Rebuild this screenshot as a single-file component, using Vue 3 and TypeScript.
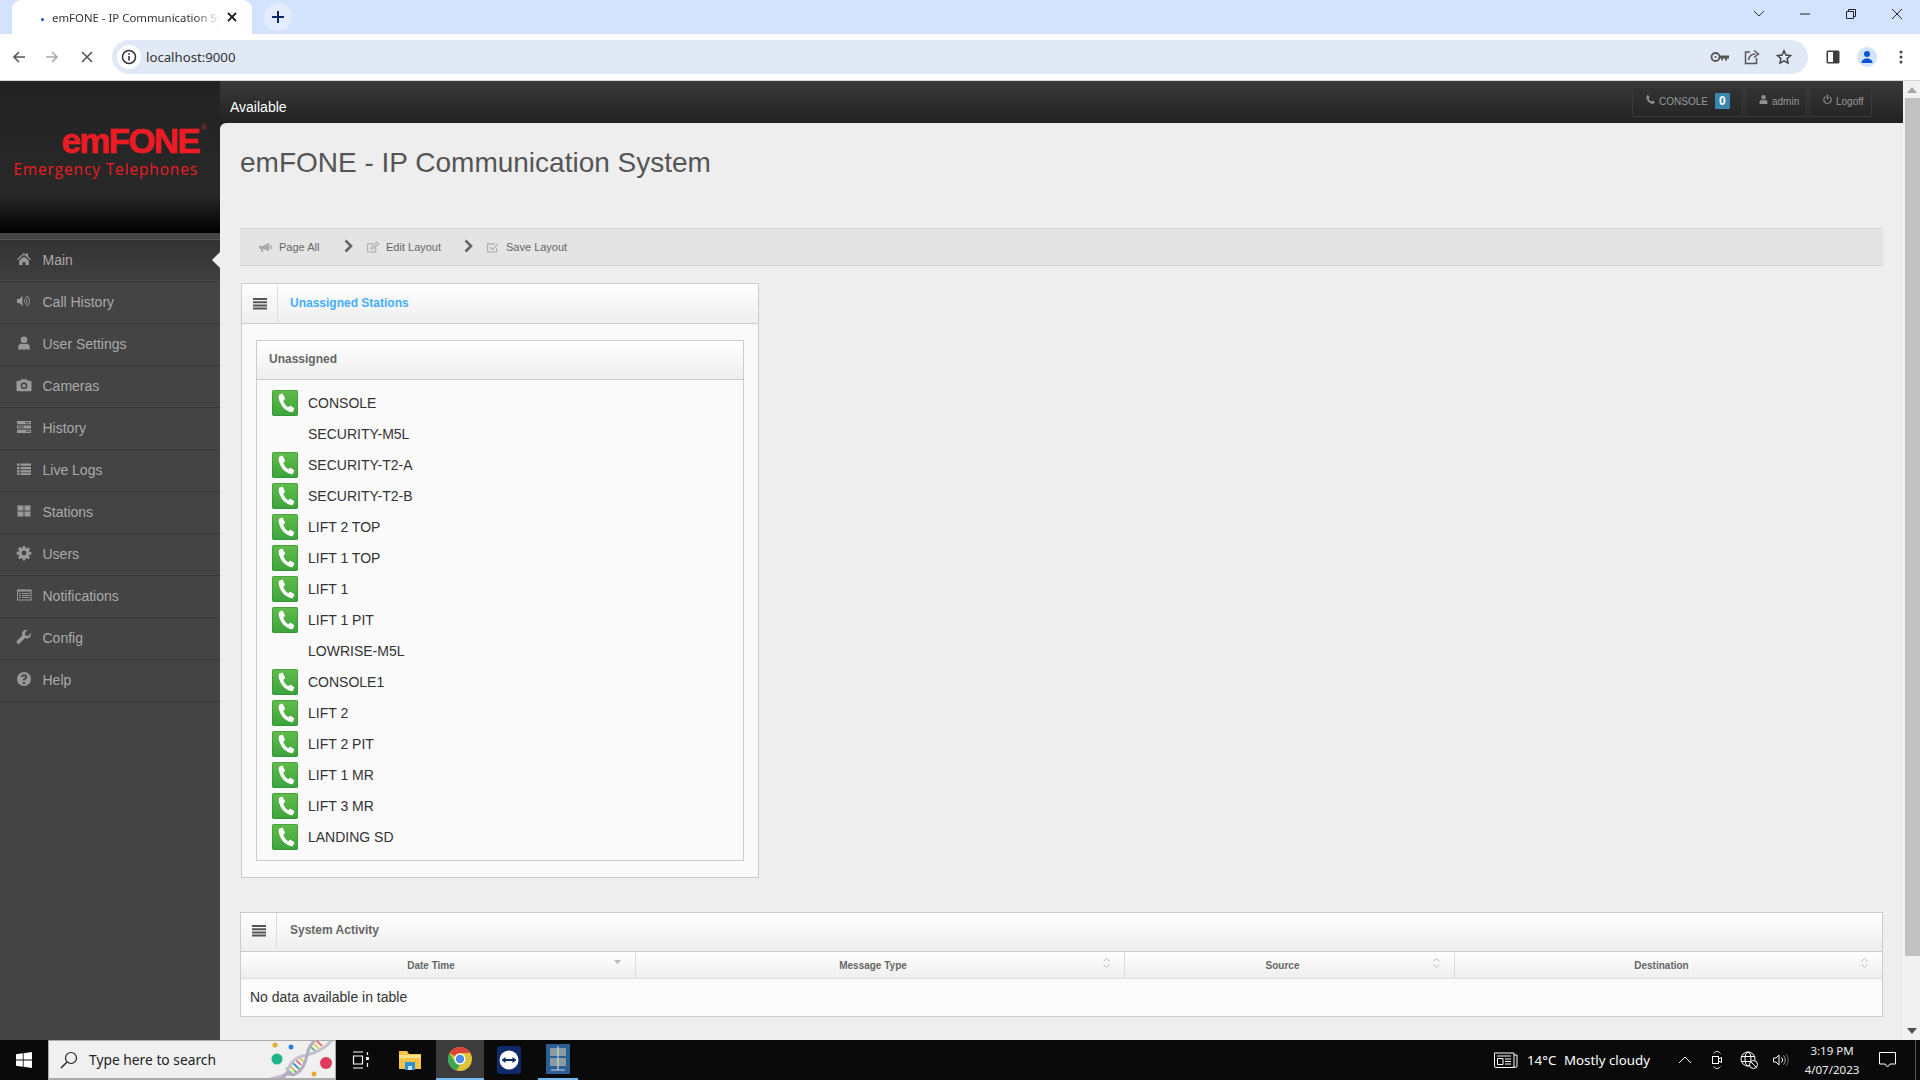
<script setup lang="ts">
interface NavItem { label: string; icon: string; active?: boolean }

const icons: Record<string, string> = {
  home: 'M8 2 1 8l.9 1L8 3.800 14.100 9l.9-1-3-2.600V2.600h-2v1.100z M3.200 9.600 8 5.400l4.800 4.200V14H9.400v-3H6.600v3H3.200z',
  volume: 'M1 6h2.200L6.500 3v10L3.200 10H1z M8 6.200a2 2 0 0 1 0 3.600z M9.200 4.400a4 4 0 0 1 0 7.200l-.5-.8a3 3 0 0 0 0-5.600z M10.500 2.600a6 6 0 0 1 0 10.800l-.5-.8a5 5 0 0 0 0-9.200z',
  user: 'M8 1.500a3.200 3.200 0 1 1 0 6.600 3.200 3.200 0 0 1 0-6.600z M2.200 14.500V12c0-2 1.400-3.300 3.100-3.600.7.500 1.600.8 2.700.8s2-.3 2.700-.8c1.700.3 3.100 1.600 3.100 3.600v2.500z',
  camera: 'M1.500 3.800h3l.8-1.500h5.400l.8 1.500h3a1 1 0 0 1 1 1v8.400a1 1 0 0 1-1 1h-13a1 1 0 0 1-1-1V4.800a1 1 0 0 1 1-1z M8 5.500a3.300 3.300 0 1 0 0 6.600 3.300 3.300 0 0 0 0-6.600z M8 7a1.800 1.800 0 1 1 0 3.600A1.800 1.800 0 0 1 8 7z',
  tasks: 'M1 2h14v3.300H1z M9 3.200h5v1H9z M1 6.400h14v3.200H1z M2 7.500h6v1H2z M1 10.700h14V14H1z M10 11.800h4v1h-4z',
  list: 'M1 2.500h2.500v2.300H1z M4.500 2.500H15v2.300H4.500z M1 5.900h2.500v2.300H1z M4.500 5.900H15v2.300H4.500z M1 9.300h2.500v2.300H1z M4.500 9.300H15v2.300H4.500z M1 12.200h2.500v1.800H1z M4.500 12.200H15v1.800H4.500z',
  th: 'M1.500 2.500h6v5h-6z M8.500 2.500h6v5h-6z M1.500 8.500h6v5h-6z M8.500 8.500h6v5h-6z',
  cog: 'M6.800 1h2.400l.3 2 1.200.5 1.600-1.200 1.700 1.700-1.200 1.600.5 1.200 2 .3v2.400l-2 .3-.5 1.200 1.200 1.600-1.700 1.700-1.600-1.200-1.200.5-.3 2H6.800l-.3-2-1.200-.5-1.600 1.200-1.700-1.700 1.200-1.600-.5-1.200-2-.3V6.800l2-.3.5-1.200-1.200-1.600 1.700-1.700 1.600 1.200 1.200-.5z M8 5.600a2.400 2.400 0 1 0 0 4.800 2.400 2.400 0 0 0 0-4.800z',
  listAlt: 'M1 2.500h14.500v11H1z M2 4.500v8h12.500v-8z M3 6h2v1H3z M6 6h7.500v1H6z M3 8h2v1H3z M6 8h7.500v1H6z M3 10h2v1H3z M6 10h7.500v1H6z',
  wrench: 'M14.800 4.200 12 7l-2.600-.6-.6-2.600L11.600 1a4.200 4.200 0 0 0-5.300 5.400L1.200 11.500a1.900 1.900 0 0 0 2.700 2.700l5.100-5.100a4.200 4.200 0 0 0 5.800-4.900z',
  help: 'M8 1a7 7 0 1 1 0 14A7 7 0 0 1 8 1z M7 11h2v2H7z M4.900 6c.2-1.800 1.500-2.700 3.200-2.700 1.800 0 3.100 1 3.100 2.600 0 1.300-.8 1.800-1.500 2.300-.5.3-.7.6-.7 1.200H7c0-1.200.4-1.900 1.200-2.400.6-.4 1-.6 1-1.100 0-.5-.4-.8-1.100-.8-.7 0-1.100.4-1.200 1z',
  phone: 'M4.500 1.500 6.700 5 5.300 6.500c.6 2 2.200 3.700 4.200 4.300L11 9.500l3.500 2.300c-.5 1.600-2 2.700-3.500 2.700C6 14 2 9 2 4.500 2 3 3 2 4.500 1.500z',
  bullhorn: 'M0 6h4.500L12.500 2v11L4.500 9.500l1 4H3L2 9.500H0z M13.500 5.500l2-.5v5l-2-.5z',
  power: 'M7 1h2v7H7z M4.500 3.200l1 1.600a4.300 4.300 0 1 0 5 0l1-1.600a6.200 6.200 0 1 1-7 0z',
  menu: 'M0 1h14v2H0z M0 4.200h14v2H0z M0 7.400h14v2H0z M0 10.600h14v2H0z',
}

const nav: NavItem[] = [
  { label: 'Main', icon: 'home', active: true },
  { label: 'Call History', icon: 'volume' },
  { label: 'User Settings', icon: 'user' },
  { label: 'Cameras', icon: 'camera' },
  { label: 'History', icon: 'tasks' },
  { label: 'Live Logs', icon: 'list' },
  { label: 'Stations', icon: 'th' },
  { label: 'Users', icon: 'cog' },
  { label: 'Notifications', icon: 'listAlt' },
  { label: 'Config', icon: 'wrench' },
  { label: 'Help', icon: 'help' },
]

const stations: { name: string; phone: boolean }[] = [
  { name: 'CONSOLE', phone: true },
  { name: 'SECURITY-M5L', phone: false },
  { name: 'SECURITY-T2-A', phone: true },
  { name: 'SECURITY-T2-B', phone: true },
  { name: 'LIFT 2 TOP', phone: true },
  { name: 'LIFT 1 TOP', phone: true },
  { name: 'LIFT 1', phone: true },
  { name: 'LIFT 1 PIT', phone: true },
  { name: 'LOWRISE-M5L', phone: false },
  { name: 'CONSOLE1', phone: true },
  { name: 'LIFT 2', phone: true },
  { name: 'LIFT 2 PIT', phone: true },
  { name: 'LIFT 1 MR', phone: true },
  { name: 'LIFT 3 MR', phone: true },
  { name: 'LANDING SD', phone: true },
]

const columns = [
  { label: 'Date Time', sorted: true },
  { label: 'Message Type', sorted: false },
  { label: 'Source', sorted: false },
  { label: 'Destination', sorted: false },
]
</script>

<template>
  <div class="screen">
    <!-- browser tab strip -->
    <div class="tabstrip">
      <div class="tab">
        <span class="tab-dot"></span>
        <span class="tab-title">emFONE - IP Communication System</span>
        <svg class="tab-close" width="12" height="12" viewBox="0 0 12 12"><path d="M2 2l8 8M10 2l-8 8" stroke="#222" stroke-width="1.800" fill="none" /></svg>
      </div>
      <div class="newtab">
        <svg width="14" height="14" viewBox="0 0 14 14"><path d="M7 1v12M1 7h12" stroke="#0b2a63" stroke-width="2" fill="none" /></svg>
      </div>
      <div class="win-controls">
        <svg class="w-chevron" width="12" height="8" viewBox="0 0 12 8"><path d="M1 1l5 5 5-5" stroke="#333" stroke-width="1" fill="none" /></svg>
        <svg class="w-btn" width="12" height="12" viewBox="0 0 12 12"><path d="M1 6h10" stroke="#222" stroke-width="1" fill="none" /></svg>
        <svg class="w-btn" width="12" height="12" viewBox="0 0 12 12"><path d="M1.500 3.500h7v7h-7zM3.500 3.500v-2h7v7h-2" stroke="#222" stroke-width="1" fill="none" /></svg>
        <svg class="w-btn" width="12" height="12" viewBox="0 0 12 12"><path d="M1 1l10 10M11 1L1 11" stroke="#222" stroke-width="1" fill="none" /></svg>
      </div>
    </div>

    <!-- browser toolbar -->
    <div class="toolbar">
      <svg class="t-back" width="14" height="14" viewBox="0 0 14 14"><path d="M13 7H2M7 2L2 7l5 5" stroke="#555" stroke-width="1.600" fill="none" /></svg>
      <svg class="t-fwd" width="14" height="14" viewBox="0 0 14 14"><path d="M1 7h11M7 2l5 5-5 5" stroke="#aaa" stroke-width="1.600" fill="none" /></svg>
      <svg class="t-stop" width="12" height="12" viewBox="0 0 12 12"><path d="M1 1l10 10M11 1L1 11" stroke="#555" stroke-width="1.600" fill="none" /></svg>
      <div class="omnibox">
        <span class="info-wrap">
          <svg width="16" height="16" viewBox="0 0 16 16"><circle cx="8" cy="8" r="6.500" stroke="#333" stroke-width="1.500" fill="none" /><path d="M8 7v4.500M8 4.300v1.500" stroke="#333" stroke-width="1.600" fill="none" /></svg>
        </span>
        <span class="url">localhost:9000</span>
        <svg class="o-key" width="20" height="14" viewBox="0 0 20 14"><circle cx="5.500" cy="7" r="4" stroke="#555" stroke-width="1.800" fill="none" /><circle cx="5.500" cy="7" r="1" fill="#555" /><path d="M9.500 5.500H19v3h-2v2h-2v-2h-2v2h-1.500V8.500H9.500z" fill="#555" /></svg>
        <svg class="o-share" width="16" height="16" viewBox="0 0 16 16"><path d="M6 3H1.500v11.500h11V9" stroke="#555" stroke-width="1.500" fill="none" /><path d="M4.500 11c.5-4 3-6 7-6M10 1.500 14.500 5 10 8.500" stroke="#555" stroke-width="1.500" fill="none" /></svg>
        <svg class="o-star" width="16" height="16" viewBox="0 0 16 16"><path d="M8 1.800l1.900 4.200 4.600.5-3.400 3.100.9 4.500L8 11.800l-4 2.300.9-4.500L1.500 6.500 6.100 6z" stroke="#444" stroke-width="1.500" fill="none" /></svg>
      </div>
      <svg class="t-panel" width="14" height="14" viewBox="0 0 14 14"><rect x="0.500" y="0.500" width="13" height="13" rx="1.500" fill="#3c3c3c" /><rect x="2" y="2" width="5" height="10" fill="#fff" /></svg>
      <span class="avatar">
        <svg width="14" height="14" viewBox="0 0 14 14"><circle cx="7" cy="4" r="3" fill="#0b57d0" /><path d="M1.500 13c0-3 2.500-4.500 5.500-4.500s5.500 1.500 5.500 4.500z" fill="#0b57d0" /></svg>
      </span>
      <svg class="t-dots" width="4" height="14" viewBox="0 0 4 14"><circle cx="2" cy="2" r="1.500" fill="#444" /><circle cx="2" cy="7" r="1.500" fill="#444" /><circle cx="2" cy="12" r="1.500" fill="#444" /></svg>
    </div>

    <!-- web page -->
    <div class="page">
      <aside class="sidebar">
        <div class="logo">
          <div class="logo-main">emFONE<sup class="logo-reg">®</sup></div>
          <div class="logo-sub">Emergency Telephones</div>
        </div>
        <div class="side-strip"></div>
        <nav class="nav">
          <a v-for="item in nav" :key="item.label" class="nav-item" :class="{ active: item.active }">
            <svg class="nav-icon" width="16" height="16" viewBox="0 0 16 16"><path :d="icons[item.icon]" fill="#999" fill-rule="evenodd" /></svg>
            <span class="nav-label">{{ item.label }}</span>
            <i v-if="item.active" class="nav-caret"></i>
          </a>
        </nav>
      </aside>

      <div class="main">
        <header class="topbar">
          <span class="status">Available</span>
          <div class="top-actions">
            <div class="top-btn console">
              <svg width="11" height="11" viewBox="0 0 16 16"><path :d="icons.phone" fill="#8f8f8f" /></svg>
              <span class="top-label">CONSOLE</span>
              <span class="badge">0</span>
            </div>
            <div class="top-btn admin">
              <svg width="11" height="11" viewBox="0 0 16 16"><path :d="icons.user" fill="#8f8f8f" /></svg>
              <span class="top-label">admin</span>
            </div>
            <div class="top-btn logoff">
              <svg width="11" height="11" viewBox="0 0 16 16"><path :d="icons.power" fill="#8f8f8f" /></svg>
              <span class="top-label">Logoff</span>
            </div>
          </div>
        </header>

        <main class="content">
          <h1 class="title">emFONE - IP Communication System</h1>

          <div class="crumbs">
            <span class="crumb c1">
              <svg width="13" height="13" viewBox="0 0 16 16"><path :d="icons.bullhorn" fill="#aaa" fill-rule="evenodd" /></svg>
              Page All
            </span>
            <svg class="chev" width="9" height="14" viewBox="0 0 9 14"><path d="M1.500 1.500l5.500 5.500-5.500 5.500" stroke="#666" stroke-width="2.600" fill="none" /></svg>
            <span class="crumb c2">
              <svg width="13" height="13" viewBox="0 0 16 16"><path d="M12 8v5.500H2v-10h7M6 10l.6-2.500 7-6 2 2-7 6z" stroke="#aaa" stroke-width="1.300" fill="none" /></svg>
              Edit Layout
            </span>
            <svg class="chev" width="9" height="14" viewBox="0 0 9 14"><path d="M1.500 1.500l5.500 5.500-5.500 5.500" stroke="#666" stroke-width="2.600" fill="none" /></svg>
            <span class="crumb c3">
              <svg width="13" height="13" viewBox="0 0 16 16"><path d="M13 9v4.500H2v-10h9M5 7.500l3 3 6.500-7" stroke="#aaa" stroke-width="1.400" fill="none" /></svg>
              Save Layout
            </span>
          </div>

          <section class="panel stations">
            <div class="panel-head">
              <span class="panel-menu">
                <svg width="14" height="14" viewBox="0 0 14 14"><path :d="icons.menu" fill="#555" /></svg>
              </span>
              <span class="panel-title blue">Unassigned Stations</span>
            </div>
            <div class="panel-body">
              <div class="card">
                <div class="card-head">Unassigned</div>
                <ul class="rows">
                  <li v-for="s in stations" :key="s.name" class="row">
                    <span class="tile-slot">
                      <span v-if="s.phone" class="tile">
                        <svg width="26" height="26" viewBox="0 0 26 26"><path d="M7.500 4.500 10.500 3.500l2.700 5.300-1.900 2c.9 2.800 2.500 4.900 4.900 6.500l2-1.800 4.200 2.700-1.300 3.200c-.5.900-1.500 1-2.500.7C12.600 20.300 7.800 14.600 6.800 8.200c-.2-1.500 0-2.800.7-3.700z" fill="#fff" /></svg>
                      </span>
                    </span>
                    <span class="row-name">{{ s.name }}</span>
                  </li>
                </ul>
              </div>
            </div>
          </section>

          <section class="panel activity">
            <div class="panel-head">
              <span class="panel-menu">
                <svg width="14" height="14" viewBox="0 0 14 14"><path :d="icons.menu" fill="#555" /></svg>
              </span>
              <span class="panel-title">System Activity</span>
            </div>
            <div class="thead">
              <div v-for="c in columns" :key="c.label" class="th">
                <span>{{ c.label }}</span>
                <svg class="sort" width="9" height="12" viewBox="0 0 9 12">
                  <path v-if="c.sorted" d="M1 3h7L4.500 7z" fill="#bbb" />
                  <path v-else d="M1.500 4.500 4.500 1.500l3 3M1.500 7.500l3 3 3-3" stroke="#bbb" stroke-width="1" fill="none" />
                </svg>
              </div>
            </div>
            <div class="empty">No data available in table</div>
          </section>
        </main>
      </div>

      <div class="scrollbar">
        <svg class="sb-up" width="10" height="6" viewBox="0 0 10 6"><path d="M5 0l5 6H0z" fill="#a3a3a3" /></svg>
        <div class="sb-thumb"></div>
        <svg class="sb-down" width="10" height="6" viewBox="0 0 10 6"><path d="M0 0h10L5 6z" fill="#505050" /></svg>
      </div>
    </div>

    <!-- windows taskbar -->
    <footer class="taskbar">
      <svg class="win-logo" width="16" height="16" viewBox="0 0 16 16"><path d="M0 2.300 6.800 1.300v6.300H0zM7.600 1.200 16 0v7.600H7.600zM0 8.400h6.800v6.300L0 13.700zM7.600 8.400H16V16l-8.400-1.200z" fill="#fff" /></svg>
      <div class="search">
        <svg width="18" height="18" viewBox="0 0 18 18"><circle cx="11" cy="7" r="5.500" stroke="#222" stroke-width="1.200" fill="none" /><path d="M7 11l-6 6" stroke="#222" stroke-width="1.400" fill="none" /></svg>
        <span class="search-text">Type here to search</span>
        <svg class="dna" width="70" height="38" viewBox="0 0 70 38">
          <path d="M21 27l8 8M24 24l8 8M27 21l8 8" stroke="#3fb56b" stroke-width="1.600" fill="none" />
          <path d="M24 24l6 6" stroke="#e8c33c" stroke-width="1.600" fill="none" />
          <path d="M27 21l6 6" stroke="#3c8ae0" stroke-width="1.600" fill="none" />
          <path d="M30 18l6 6" stroke="#e85a5a" stroke-width="1.600" fill="none" />
          <path d="M33 15l6 6" stroke="#e8c33c" stroke-width="1.600" fill="none" />
          <path d="M45 5l6 6" stroke="#3fb56b" stroke-width="1.600" fill="none" />
          <path d="M48 2l6 6" stroke="#e8c33c" stroke-width="1.600" fill="none" />
          <path d="M51-1l6 6" stroke="#e85a5a" stroke-width="1.600" fill="none" />
          <path d="M12 35l5 4" stroke="#e85a5a" stroke-width="2" fill="none" />
          <path d="M3 39C10 36 18 36 22 32 24 22 30 16 42 14 50 12 60 8 67-1" stroke="#c5c0d0" stroke-width="3" fill="none" />
          <path d="M14 39c4-2 6-4 8-7 6 4 16 1 20-18 1-6 4-11 8-15" stroke="#b3adc2" stroke-width="3" fill="none" />
          <circle cx="12" cy="18" r="5.500" fill="#1db48a" /><circle cx="61" cy="22" r="6" fill="#df3a5e" /><circle cx="26" cy="6" r="2.500" fill="#2a7fe0" /><circle cx="10" cy="4" r="2.500" fill="#e8a92c" /><circle cx="49" cy="33" r="2.500" fill="#e8a92c" />
        </svg>
      </div>
      <svg class="taskview" width="20" height="18" viewBox="0 0 20 18"><path d="M2 1h10M2 17h10M2.500 5h9v8h-9z" stroke="#fff" stroke-width="1.200" fill="none" /><path d="M15 6h3v3h-3z" fill="#fff" /><path d="M16.500 1v3M16.500 12v4" stroke="#fff" stroke-width="1.200" fill="none" /></svg>
      <svg class="folder" width="24" height="22" viewBox="0 0 24 22"><path d="M1 2h8l2 3h12v15H1z" fill="#f6c344" /><path d="M1 6h22v3H1z" fill="#fde28a" /><path d="M7 13h10v8H7z" fill="#2f8fd8" /><path d="M10 17h4v4h-4z" fill="#bfe3fb" /></svg>
      <div class="tb-chrome">
        <svg width="24" height="24" viewBox="0 0 24 24">
          <circle cx="12" cy="12" r="12" fill="#e0c23a" />
          <path d="M12 0a12 12 0 0 1 10.400 6H12a6 6 0 0 0-5.200 3L1.600 6A12 12 0 0 1 12 0z" fill="#db4437" />
          <path d="M1.600 6l5.200 9a6 6 0 0 0 5.200 3l-3.700 5.500A12 12 0 0 1 1.600 6z" fill="#3aa757" />
          <circle cx="12" cy="12" r="5.500" fill="#fff" /><circle cx="12" cy="12" r="4.200" fill="#4a8af4" />
        </svg>
      </div>
      <svg class="teamviewer" width="24" height="30" viewBox="0 0 24 30"><rect y="1" width="24" height="28" rx="3" fill="#0e2a6b" /><circle cx="12" cy="15" r="9.500" fill="#fff" /><path d="M4.500 15l4-3v2h7v-2l4 3-4 3v-2h-7v2z" fill="#0e2a6b" /></svg>
      <div class="tb-app">
        <svg width="24" height="30" viewBox="0 0 24 30"><rect y="0" width="24" height="30" fill="#2b5f94" /><rect x="4" y="4" width="16" height="8" fill="#8a9aa8" /><rect x="4" y="14" width="16" height="8" fill="#8a9aa8" /><path d="M12 2v24M5 26h14" stroke="#c8d2da" stroke-width="1.200" fill="none" /><path d="M10 7l3 1M10 17l3 1" stroke="#8fd14f" stroke-width="1.200" fill="none" /></svg>
      </div>

      <div class="tray">
        <svg class="news" width="24" height="16" viewBox="0 0 24 16"><path d="M.5 1h19.500v14.500H2a1.500 1.500 0 0 1-1.500-1.500zM20 3h3v11a1.500 1.500 0 0 1-3 0M3 4h14M3.500 6.500h5.500v6H3.500zM11 7h6M11 9.500h6M11 12h6" stroke="#fff" stroke-width="1" fill="none" /></svg>
        <span class="temp">14°C</span>
        <span class="cond">Mostly cloudy</span>
        <svg class="caret-up" width="14" height="8" viewBox="0 0 14 8"><path d="M1 7l6-6 6 6" stroke="#fff" stroke-width="1" fill="none" /></svg>
        <svg class="meet" width="12" height="18" viewBox="0 0 12 18"><path d="M2.500 2.500a4 4 0 0 1 7 0M2.500 15.500a4 4 0 0 0 7 0" stroke="#ccc" stroke-width="1" fill="none" /><rect x="1.500" y="5.500" width="6" height="7" stroke="#fff" fill="none" /><path d="M7.500 8l3-1.500v5l-3-1.500" stroke="#fff" fill="none" /></svg>
        <svg class="globe" width="18" height="18" viewBox="0 0 18 18"><circle cx="8" cy="8" r="7" stroke="#fff" fill="none" /><ellipse cx="8" cy="8" rx="3" ry="7" stroke="#fff" fill="none" /><path d="M1 5.500h14M1 10.500h14" stroke="#fff" fill="none" /><circle cx="13.500" cy="13.500" r="4" fill="#0a0a0a" stroke="#fff" /><path d="M11 11l5 5" stroke="#fff" /></svg>
        <svg class="vol" width="16" height="14" viewBox="0 0 16 14"><path d="M.5 5h2.500l3-3v10l-3-3H.5z" stroke="#fff" fill="none" /><path d="M8.500 4.500a3.500 3.500 0 0 1 0 5" stroke="#fff" fill="none" /><path d="M10.500 2.500a6.500 6.500 0 0 1 0 9" stroke="#aaa" fill="none" /><path d="M13 1a9 9 0 0 1 0 12" stroke="#666" fill="none" /></svg>
        <div class="clock"><span>3:19 PM</span><span>4/07/2023</span></div>
        <svg class="notif" width="18" height="16" viewBox="0 0 18 16"><path d="M.5.500h16v11.500H11l-2.500 3-2.500-3H.5z" stroke="#fff" fill="none" /></svg>
        <span class="peek"></span>
      </div>
    </footer>
  </div>
</template>

<style scoped>
.screen { width: 1920px; height: 1080px; display: flex; flex-direction: column; overflow: hidden; font-family: "Liberation Sans", Arial, sans-serif; background: #eee; }
svg { display: block; flex: none; }

/* tab strip */
.tabstrip { height: 34px; background: #d3e3fd; display: flex; align-items: flex-end; flex: none; }
.tab { width: 240px; height: 34px; margin-left: 12px; background: #fff; border-radius: 9px 9px 0 0; display: flex; align-items: center; padding-left: 29px; box-sizing: border-box; font: 11.400px "Noto Sans", "Open Sans", sans-serif; color: #333; }
.tab-dot { width: 3px; height: 3px; border-radius: 50%; background: #1a56b0; margin-right: 8px; margin-top: 4px; flex: none; }
.tab-title { width: 168px; overflow: hidden; white-space: nowrap; flex: none; -webkit-mask-image: linear-gradient(90deg, #000 85%, transparent); mask-image: linear-gradient(90deg, #000 85%, transparent); }
.tab-close { margin-left: 6px; }
.newtab { width: 28px; height: 28px; border-radius: 50%; background: #e2ecfc; margin: 0 0 3px 12px; display: flex; align-items: center; justify-content: center; }
.win-controls { margin-left: auto; align-self: stretch; display: flex; align-items: center; padding-right: 17px; padding-bottom: 6px; }
.w-chevron { margin-right: 34px; }
.w-btn { margin-left: 34px; }
.win-controls .w-chevron + .w-btn { margin-left: 0; }

/* toolbar */
.toolbar { height: 47px; box-sizing: border-box; border-bottom: 1px solid #d6d6d6; background: #fff; display: flex; align-items: center; flex: none; }
.t-back { margin-left: 12px; }
.t-fwd { margin-left: 19px; }
.t-stop { margin-left: 22px; }
.omnibox { margin-left: 19px; width: 1696px; height: 34px; border-radius: 17px; background: #e1e9f7; display: flex; align-items: center; flex: none; }
.info-wrap { width: 24px; height: 24px; border-radius: 50%; background: #fff; margin-left: 5px; display: flex; align-items: center; justify-content: center; flex: none; }
.url { margin-left: 5px; font: 13.200px "Noto Sans", "Open Sans", sans-serif; color: #333; }
.o-key { margin-left: auto; }
.o-share { margin-left: 14px; }
.o-star { margin-left: 16px; margin-right: 16px; }
.t-panel { margin-left: 18px; }
.avatar { width: 20px; height: 20px; border-radius: 50%; background: #d3e3fd; margin-left: 17px; display: flex; align-items: center; justify-content: center; }
.t-dots { margin-left: 22px; }

/* page */
.page { flex: 1; min-height: 0; display: flex; }
.sidebar { width: 220px; flex: none; background: #444; display: flex; flex-direction: column; }
.logo { height: 152px; box-sizing: border-box; background: linear-gradient(#232323 0, #282828 75%, #000 100%); padding-top: 42px; color: #ed1c24; display: flex; flex-direction: column; align-items: flex-end; padding-right: 16px; }
.logo-main { font: bold 35px/36px "Liberation Sans", sans-serif; letter-spacing: -1.700px; position: relative; margin-right: 5px; -webkit-text-stroke: .6px #ed1c24; }
.logo-reg { position: absolute; right: -8px; top: 0; font-size: 8px; line-height: 10px; font-weight: normal; color: #a33; letter-spacing: 0; -webkit-text-stroke: 0; }
.logo-sub { font: 15.500px/18px "Open Sans", "Noto Sans", sans-serif; margin-top: 1px; margin-right: 6px; white-space: nowrap; letter-spacing: .85px; }
.side-strip { height: 7px; flex: none; background: #444; border-bottom: 1px solid #555; box-sizing: border-box; }
.nav { display: flex; flex-direction: column; }
.nav-item { height: 42px; box-sizing: border-box; display: flex; align-items: center; position: relative; padding-left: 16px; padding-bottom: 2px; font-size: 14px; color: #aaa; border-bottom: 1px solid #333; box-shadow: inset 0 -1px 0 #4a4a4a; }
.nav-item.active { background: linear-gradient(#333, #3f3f3f); }
.nav-icon { margin-right: 10.500px; margin-top: -2px; }
.nav-caret { position: absolute; right: 0; top: 12px; border: 8px solid transparent; border-right-color: #eee; border-left-width: 0; }

/* top bar */
.main { flex: 1; min-width: 0; display: flex; flex-direction: column; background: linear-gradient(#3a3a3a, #202020 45px); }
.topbar { height: 42px; flex: none; display: flex; align-items: flex-start; }
.status { margin: 17px 0 0 10px; font-size: 14px; line-height: 18px; color: #fff; }
.top-actions { margin-left: auto; margin-right: 31px; margin-top: 6px; display: flex; gap: 2px; }
.top-btn { height: 30px; box-sizing: border-box; display: flex; align-items: center; padding: 0 0 1px 12px; background: linear-gradient(#333, #262626); border: 1px solid #3b3b3b; border-radius: 2px; font-size: 10px; color: #999; }
.top-btn svg { margin-top: -5px; margin-right: 3px; }
.console { width: 111px; }
.admin { width: 62px; }
.logoff { width: 63px; }
.badge { width: 15px; height: 16px; margin-left: 7px; margin-top: -2px; background: #3a87ad; color: #fff; font: bold 12px/16px "Liberation Sans", sans-serif; text-align: center; border-radius: 1px; }

/* content */
.content { flex: 1; min-height: 0; box-sizing: border-box; background: #eee; border-radius: 6px 0 0 0; padding: 20px 20px 0 20px; }
.title { margin: 0 0 45px; font-size: 28px; line-height: 40px; font-weight: normal; color: #555; }
.crumbs { height: 38px; box-sizing: border-box; background: #e4e4e4; border-top: 1px solid #d6d6d6; border-bottom: 1px solid #d6d6d6; display: flex; align-items: center; padding-left: 19px; font-size: 11px; color: #666; }
.crumb { display: flex; align-items: center; gap: 7px; }
.c1 { width: 85px; }
.c2 { width: 98px; margin-left: 13px; }
.c3 { margin-left: 13px; }
.chev { margin-top: -2px; }

/* panels */
.panel { margin-left: 1px; border: 1px solid #ccc; background: #fafafa; box-sizing: border-box; }
.stations { width: 518px; margin-top: 17px; }
.activity { margin-top: 34px; margin-left: 0; }
.panel-head { height: 39px; display: flex; align-items: center; background: linear-gradient(#fff, #eee); border-bottom: 1px solid #ccc; box-sizing: content-box; }
.activity .panel-head { height: 36px; padding-bottom: 2px; }
.panel-menu { width: 35px; height: 36px; border-right: 1px solid #ddd; display: flex; align-items: center; justify-content: center; flex: none; }
.panel-title { margin-left: 13px; padding-bottom: 2px; font-size: 12px; font-weight: bold; color: #666; }
.panel-title.blue { color: #44aeff; margin-left: 12px; }
.panel-body { padding: 16px 14px 16px 14px; }
.card { border: 1px solid #ccc; background: #fafafa; }
.card-head { height: 38px; line-height: 36px; padding-left: 12px; font-size: 12px; font-weight: bold; color: #666; background: linear-gradient(#fff, #eee); border-bottom: 1px solid #ccc; }
.rows { list-style: none; margin: 0; padding: 7px 0 8px; }
.row { height: 31px; display: flex; align-items: center; padding-left: 15px; font-size: 14px; color: #333; }
.tile-slot { width: 26px; height: 26px; flex: none; margin-right: 10px; }
.tile { width: 26px; height: 26px; border-radius: 2px; background: linear-gradient(#62bd4a, #3ba33c); box-shadow: inset 0 0 0 1px rgba(40, 130, 50, .45); display: flex; align-items: center; justify-content: center; }

/* table */
.thead { display: grid; grid-template-columns: 395px 489px 330px 1fr; height: 26px; background: linear-gradient(#fff, #eee); border-bottom: 1px solid #ddd; }
.th { position: relative; display: flex; align-items: center; justify-content: center; font-size: 10px; font-weight: bold; color: #666; border-right: 1px solid #ddd; padding: 1px 14px 0 0; }
.th:last-child { border-right: 0; }
.sort { position: absolute; right: 13px; top: 5px; }
.empty { height: 37px; line-height: 36px; padding-left: 9px; font-size: 14px; color: #333; background: #fbfbfb; }

/* scrollbar */
.scrollbar { width: 17px; flex: none; background: #f1f1f1; display: flex; flex-direction: column; align-items: center; position: relative; }
.sb-up { margin-top: 6px; }
.sb-thumb { width: 15px; height: 858px; margin-top: 5px; background: #c1c1c1; margin-left: 2px; }
.sb-down { margin-top: auto; margin-bottom: 6px; }

/* taskbar */
.taskbar { height: 40px; flex: none; background: #0a0a0a; display: flex; align-items: center; color: #fff; font-family: "Noto Sans", "Open Sans", sans-serif; }
.win-logo { margin-left: 16px; }
.search { width: 288px; height: 40px; box-sizing: border-box; margin-left: 16px; background: #f0f0f0; border: 1px solid #aaa; border-bottom: 2px solid #aaa; display: flex; align-items: center; padding-left: 11px; color: #222; font-size: 13.800px; position: relative; overflow: hidden; }
.search-text { margin-left: 11px; }
.dna { position: absolute; right: 0; top: 0; }
.taskview { margin-left: 15px; }
.folder { margin-left: 27px; }
.tb-chrome { width: 48px; height: 40px; margin-left: 14px; background: #3c3c3c; border-bottom: 2px solid #76b9ed; box-sizing: border-box; display: flex; align-items: center; justify-content: center; }
.teamviewer { margin-left: 13px; }
.tb-app { width: 40px; height: 40px; margin-left: 17px; border-bottom: 2px solid #76b9ed; box-sizing: border-box; display: flex; align-items: center; justify-content: center; }
.tray { margin-left: auto; display: flex; align-items: center; height: 100%; font-size: 13.300px; }
.temp { margin-left: 9px; width: 28px; white-space: nowrap; }
.cond { margin-left: 9px; width: 86px; white-space: nowrap; }
.caret-up { margin-left: 28px; }
.meet { margin-left: 19px; }
.globe { margin-left: 17px; }
.vol { margin-left: 15px; }
.clock { width: 70px; margin-left: 8px; display: flex; flex-direction: column; align-items: center; font-size: 11.500px; line-height: 19px; color: #eee; }
.notif { margin-left: 12px; }
.peek { width: 1px; height: 40px; background: #555; margin-left: 18px; margin-right: 4px; }
</style>
